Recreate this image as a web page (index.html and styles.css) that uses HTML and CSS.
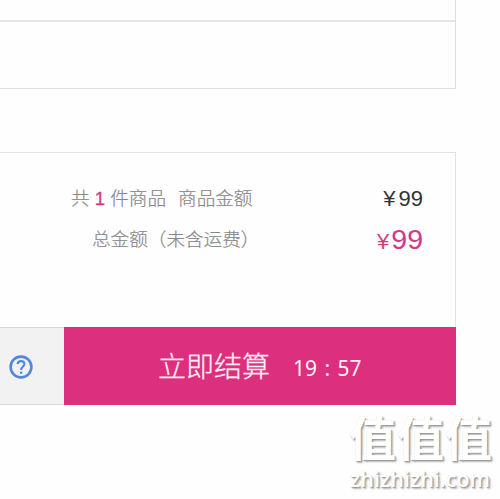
FILE: index.html
```html
<!DOCTYPE html>
<html lang="zh-CN">
<head>
<meta charset="UTF-8">
<title>购物车</title>
<link rel="stylesheet" href="styles.css">
</head>
<body>

<!-- Cart rows -->
<div class="cart-list">
    <div class="cart-row cart-row-first"></div>
    <div class="cart-row"></div>
</div>

<!-- Totals -->
<div class="summary">
    <div class="summary-row">
        <div class="label">共 <b class="count">1</b> 件商品<span class="sub-label">商品金额</span></div>
        <div class="price"><span class="yen">¥</span>99</div>
    </div>
    <div class="summary-row total-row">
        <div class="label total-label">总金额（未含运费）</div>
        <div class="price total-price"><span class="yen">¥</span>99</div>
    </div>
</div>

<!-- Checkout bar -->
<div class="checkout">
    <div class="help">
        <svg class="help-icon" viewBox="0 0 24 24" width="24" height="24">
            <circle cx="12" cy="12" r="10.4"/>
            <path class="mark" d="M8.6 9.2C8.8 7.1 10.2 6.1 12 6.1C14 6.1 15.4 7.2 15.4 8.9C15.4 11.4 12.1 11.6 12.1 15"/>
            <path class="dot" d="M10.9 16.6h2.4v2.2h-2.4z"/>
        </svg>
    </div>
    <button class="pay-btn"><span class="pay-text">立即结算</span><span class="timer">19 : 57</span></button>
</div>

<div class="watermark">
    <div class="watermark-name">值值值</div>
    <div class="watermark-url">zhizhizhi.com</div>
</div>

</body>
</html>
```

FILE: styles.css
```css
* {
    box-sizing: border-box;
}
body {
    margin: 0;
    height: 499px;
    overflow: hidden;
    position: relative;
    background-color: #fefefe;
    font-family: "Liberation Sans", "Noto Sans CJK SC", sans-serif;
    color: #888;
}
.cart-list {
    width: 456px;
    height: 89px;
    border-right: 1px solid #dedede;
    border-bottom: 1px solid #dedede;
}
.cart-row-first {
    height: 22px;
    border-bottom: 2px solid #e6e6e6;
}
.summary {
    width: 456px;
    height: 175px;
    margin-top: 63px;
    padding: 26px 32px 0 0;
    border-top: 1px solid #e2e2e2;
    border-right: 1px solid #e2e2e2;
}
.summary-row {
    display: flex;
    justify-content: space-between;
    height: 41px;
    line-height: 40px;
    padding-left: 71px;
}
.total-row {
    padding-left: 92px;
}
.label {
    font-size: 18.6px;
    font-weight: 300;
    white-space: nowrap;
    -webkit-text-stroke: 0.2px #888;
}
.count {
    color: #d23a86;
    font-weight: 400;
    -webkit-text-stroke: 0.3px #d23a86;
}
.sub-label {
    margin-left: 12px;
}
.price {
    font-size: 22px;
    color: #333;
}
.price .yen {
    margin-right: 3px;
}
.total-price {
    font-size: 28.5px;
    line-height: 38px;
    color: #d23a86;
}
.total-price .yen {
    margin-right: 2px;
    font-size: 22px;
}
.checkout {
    display: flex;
    width: 456px;
    height: 78px;
}
.help {
    width: 64px;
    padding: 27px 0 0 9px;
    background-color: #f2f2f2;
    border-top: 1px solid #d8d8d8;
    border-bottom: 1px solid #d8d8d8;
}
.help-icon {
    display: block;
    fill: none;
    stroke: #5187dc;
    stroke-width: 2.6;
}
.help-icon .mark {
    stroke-width: 2.1;
}
.help-icon .dot {
    fill: #5187dc;
    stroke: none;
}
.pay-btn {
    flex: 1;
    display: flex;
    align-items: flex-start;
    padding: 21px 0 0 94px;
    border: none;
    background-color: #dc307e;
    color: #fdeff6;
    font-family: inherit;
    line-height: 40px;
}
.pay-text {
    font-size: 28px;
    font-weight: 300;
    -webkit-text-stroke: 0.3px #fdeff6;
}
.timer {
    margin-left: 23px;
    font-family: "Noto Sans", sans-serif;
    font-size: 21px;
    word-spacing: 2px;
}
/* site mark over the bottom right corner */
.watermark {
    position: absolute;
    left: 349px;
    top: 413px;
    color: #fff;
    white-space: nowrap;
    text-shadow: 1px 1px 1px #999, 2px 2px 2px #bbb, 0 0 1px #e4e4e4;
}
.watermark-name {
    font-size: 47px;
    font-weight: 700;
    line-height: 54px;
    letter-spacing: 1px;
}
.watermark-url {
    padding-left: 1px;
    font-family: "Open Sans", sans-serif;
    font-size: 21.5px;
    font-weight: 600;
    line-height: 24px;
}
```
